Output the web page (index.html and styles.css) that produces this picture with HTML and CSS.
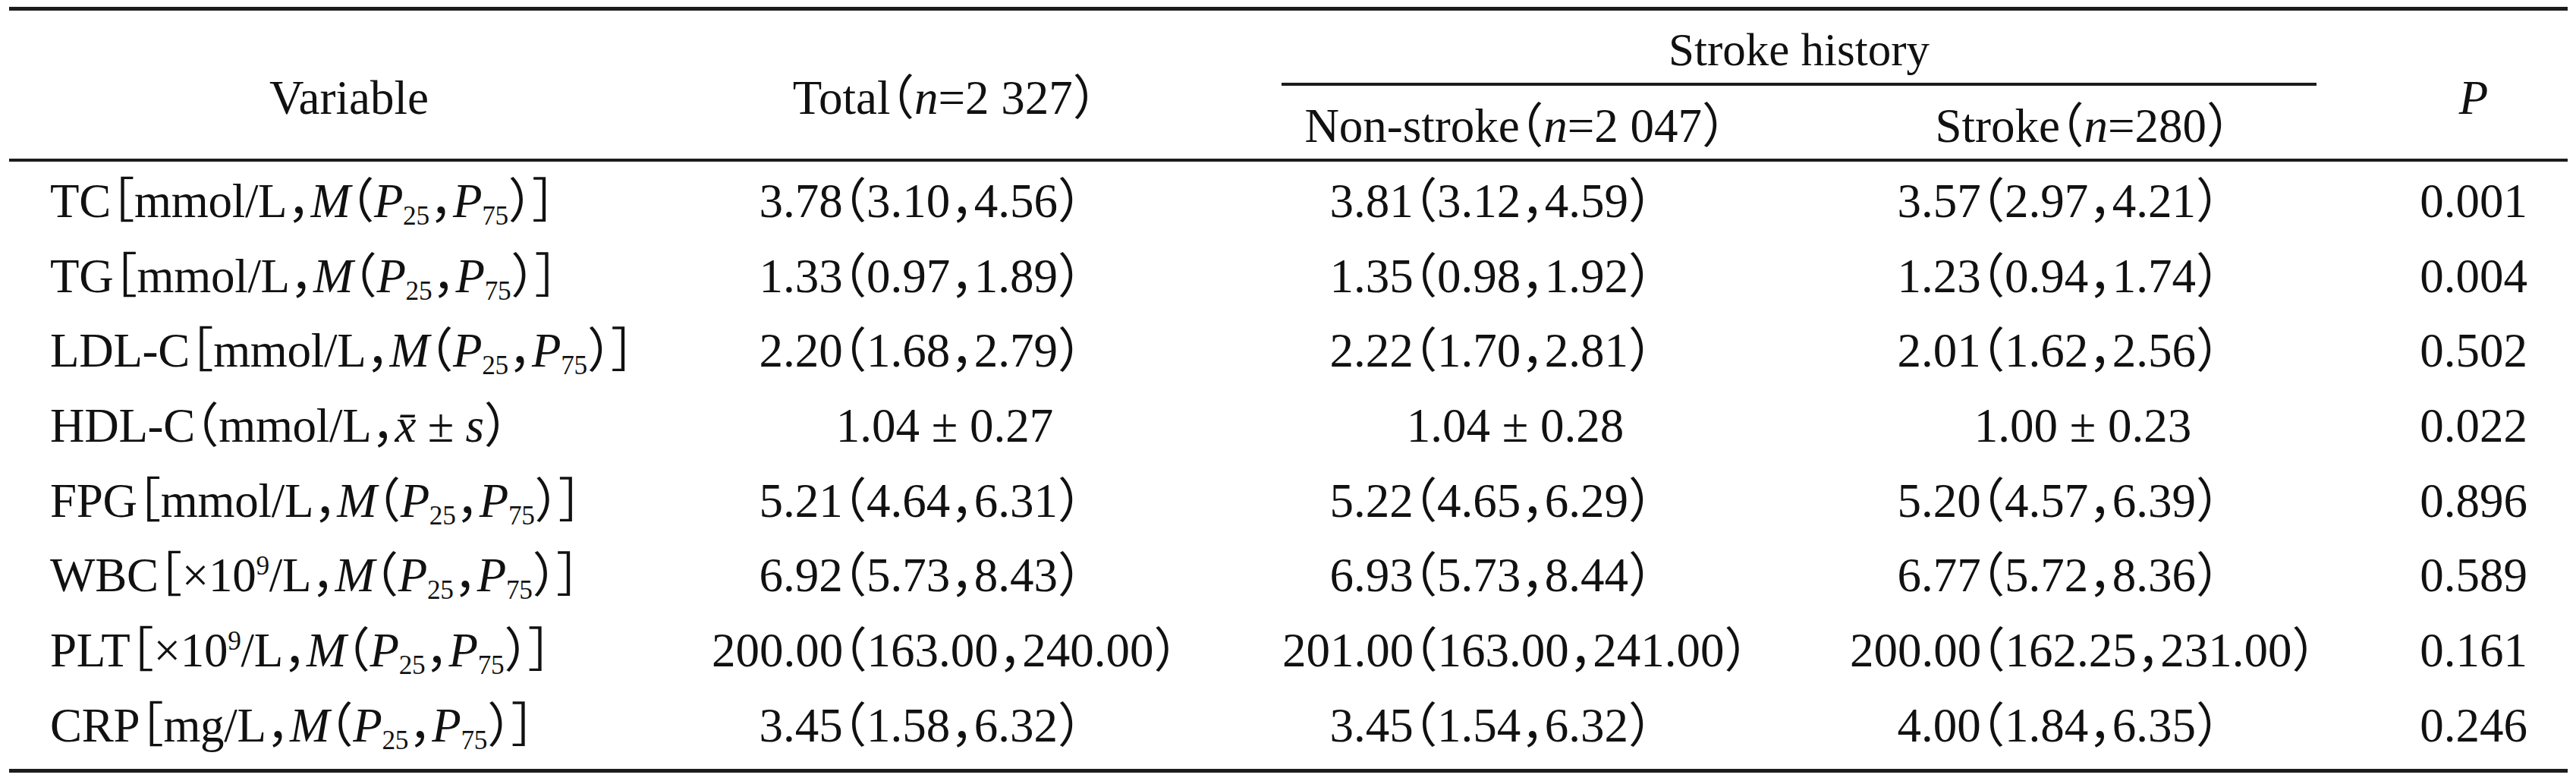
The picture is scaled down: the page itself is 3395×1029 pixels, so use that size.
FILE: index.html
```html
<!DOCTYPE html>
<html lang="en">
<head>
<meta charset="utf-8">
<title>Stroke history table</title>
<link rel="stylesheet" href="styles.css">
</head>
<body>
<table class="data-table">
  <colgroup>
    <col class="c-var">
    <col class="c-total">
    <col class="c-non">
    <col class="c-stroke">
    <col class="c-p">
  </colgroup>
  <thead>
    <tr>
      <th rowspan="2" class="h-span h-var">Variable</th>
      <th rowspan="2" class="h-span">Total（<i>n</i>=2 327）</th>
      <th colspan="2" class="h-group"><div class="group-label">Stroke history</div></th>
      <th rowspan="2" class="h-span"><i>P</i></th>
    </tr>
    <tr>
      <th class="h-sub">Non-stroke（<i>n</i>=2 047）</th>
      <th class="h-sub">Stroke（<i>n</i>=280）</th>
    </tr>
  </thead>
  <tbody>
    <tr>
      <td class="var">TC［mmol/L，<i>M</i>（<i>P</i><span class="sub">25</span>，<i>P</i><span class="sub">75</span>）］</td>
      <td class="q">3.78（3.10，4.56）</td>
      <td class="q">3.81（3.12，4.59）</td>
      <td class="q">3.57（2.97，4.21）</td>
      <td>0.001</td>
    </tr>
    <tr>
      <td class="var">TG［mmol/L，<i>M</i>（<i>P</i><span class="sub">25</span>，<i>P</i><span class="sub">75</span>）］</td>
      <td class="q">1.33（0.97，1.89）</td>
      <td class="q">1.35（0.98，1.92）</td>
      <td class="q">1.23（0.94，1.74）</td>
      <td>0.004</td>
    </tr>
    <tr>
      <td class="var">LDL-C［mmol/L，<i>M</i>（<i>P</i><span class="sub">25</span>，<i>P</i><span class="sub">75</span>）］</td>
      <td class="q">2.20（1.68，2.79）</td>
      <td class="q">2.22（1.70，2.81）</td>
      <td class="q">2.01（1.62，2.56）</td>
      <td>0.502</td>
    </tr>
    <tr>
      <td class="var">HDL-C（mmol/L，<i>x̄</i> ± <i>s</i>）</td>
      <td>1.04 ± 0.27</td>
      <td>1.04 ± 0.28</td>
      <td>1.00 ± 0.23</td>
      <td>0.022</td>
    </tr>
    <tr>
      <td class="var">FPG［mmol/L，<i>M</i>（<i>P</i><span class="sub">25</span>，<i>P</i><span class="sub">75</span>）］</td>
      <td class="q">5.21（4.64，6.31）</td>
      <td class="q">5.22（4.65，6.29）</td>
      <td class="q">5.20（4.57，6.39）</td>
      <td>0.896</td>
    </tr>
    <tr>
      <td class="var">WBC［×10<span class="sup">9</span>/L，<i>M</i>（<i>P</i><span class="sub">25</span>，<i>P</i><span class="sub">75</span>）］</td>
      <td class="q">6.92（5.73，8.43）</td>
      <td class="q">6.93（5.73，8.44）</td>
      <td class="q">6.77（5.72，8.36）</td>
      <td>0.589</td>
    </tr>
    <tr>
      <td class="var">PLT［×10<span class="sup">9</span>/L，<i>M</i>（<i>P</i><span class="sub">25</span>，<i>P</i><span class="sub">75</span>）］</td>
      <td>200.00（163.00，240.00）</td>
      <td>201.00（163.00，241.00）</td>
      <td>200.00（162.25，231.00）</td>
      <td>0.161</td>
    </tr>
    <tr class="last">
      <td class="var">CRP［mg/L，<i>M</i>（<i>P</i><span class="sub">25</span>，<i>P</i><span class="sub">75</span>）］</td>
      <td class="q">3.45（1.58，6.32）</td>
      <td class="q">3.45（1.54，6.32）</td>
      <td class="q">4.00（1.84，6.35）</td>
      <td>0.246</td>
    </tr>
  </tbody>
</table>
</body>
</html>
```

FILE: styles.css
```css
html, body {
  margin: 0;
  padding: 0;
  background: #ffffff;
}

body {
  font-family: "Liberation Serif", "Noto Sans CJK SC", serif;
  font-size: 63px;
  line-height: 70px;
  color: #111111;
  font-feature-settings: "halt" 1;
}

.data-table {
  margin: 9px 0 0 12px;
  width: 3372px;
  table-layout: fixed;
  border-collapse: separate;
  border-spacing: 0;
  border-top: 5px solid #1c1c1c;
  border-bottom: 5px solid #1c1c1c;
}

.c-var { width: 838px; }
.c-total { width: 790px; }
.c-non { width: 714px; }
.c-stroke { width: 782px; }
.c-p { width: 248px; }

th {
  font-weight: normal;
  white-space: nowrap;
  text-align: center;
  padding: 0;
}

.h-span {
  vertical-align: top;
  padding-top: 80px;
  border-bottom: 4px solid #1c1c1c;
}

.h-var {
  padding-left: 58px;
}

.h-group {
  vertical-align: top;
  padding-top: 17px;
}

.group-label {
  margin: 0 83px 0 49px;
  padding-bottom: 8px;
  border-bottom: 4px solid #1c1c1c;
  font-size: 61px;
}

.h-sub {
  vertical-align: top;
  padding: 18px 0 8px 0;
  border-bottom: 4px solid #1c1c1c;
}

td {
  white-space: nowrap;
  text-align: center;
  vertical-align: top;
  padding: 17px 0 11.66px 0;
}

td.var {
  text-align: left;
  padding-left: 54px;
  letter-spacing: -0.3px;
}

td.q {
  padding-right: 64px;
}

tr.last td {
  padding-bottom: 22.7px;
}

i {
  font-style: italic;
}

.sub {
  font-size: 0.56em;
  line-height: 0;
  vertical-align: -0.28em;
}

.sup {
  font-size: 0.56em;
  line-height: 0;
  vertical-align: 0.62em;
}
```
